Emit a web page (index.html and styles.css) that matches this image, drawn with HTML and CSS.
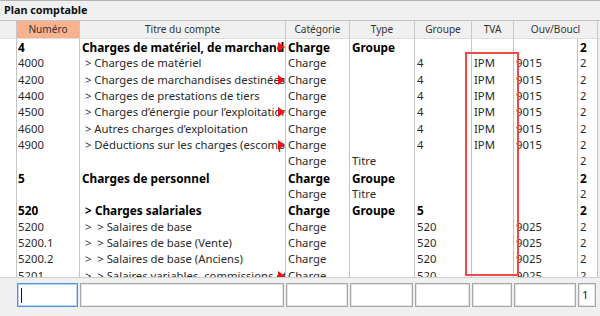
FILE: index.html
```html
<!DOCTYPE html>
<html lang="fr">
<head>
<meta charset="utf-8">
<title>Plan comptable</title>
<link rel="stylesheet" href="styles.css">
</head>
<body>
<div class="app">
  <div class="titlebar">Plan comptable</div>
  <div class="grid header">
    <div class="c rh"></div>
    <div class="c sel">Numéro</div>
    <div class="c">Titre du compte</div>
    <div class="c">Catégorie</div>
    <div class="c">Type</div>
    <div class="c">Groupe</div>
    <div class="c">TVA</div>
    <div class="c span2">Ouv/Boucl</div>
    <div class="c edge"></div>
  </div>
  <div class="body">
    <div class="grid row b">
      <div class="c rh"></div><div class="c">4</div><div class="c t ov">Charges de matériel, de marchandises et de prestations de tiers</div><div class="c">Charge</div><div class="c">Groupe</div><div class="c"></div><div class="c"></div><div class="c"></div><div class="c">2</div><div class="c edge"></div>
    </div>
    <div class="grid row">
      <div class="c rh"></div><div class="c">4000</div><div class="c t"> &gt; Charges de matériel</div><div class="c">Charge</div><div class="c"></div><div class="c">4</div><div class="c">IPM</div><div class="c">9015</div><div class="c">2</div><div class="c edge"></div>
    </div>
    <div class="grid row">
      <div class="c rh"></div><div class="c">4200</div><div class="c t ov"> &gt; Charges de marchandises destinées à la revente</div><div class="c">Charge</div><div class="c"></div><div class="c">4</div><div class="c">IPM</div><div class="c">9015</div><div class="c">2</div><div class="c edge"></div>
    </div>
    <div class="grid row">
      <div class="c rh"></div><div class="c">4400</div><div class="c t"> &gt; Charges de prestations de tiers</div><div class="c">Charge</div><div class="c"></div><div class="c">4</div><div class="c">IPM</div><div class="c">9015</div><div class="c">2</div><div class="c edge"></div>
    </div>
    <div class="grid row">
      <div class="c rh"></div><div class="c">4500</div><div class="c t ov"> &gt; Charges d’énergie pour l’exploitation</div><div class="c">Charge</div><div class="c"></div><div class="c">4</div><div class="c">IPM</div><div class="c">9015</div><div class="c">2</div><div class="c edge"></div>
    </div>
    <div class="grid row">
      <div class="c rh"></div><div class="c">4600</div><div class="c t"> &gt; Autres charges d’exploitation</div><div class="c">Charge</div><div class="c"></div><div class="c">4</div><div class="c">IPM</div><div class="c">9015</div><div class="c">2</div><div class="c edge"></div>
    </div>
    <div class="grid row">
      <div class="c rh"></div><div class="c">4900</div><div class="c t ov"> &gt; Déductions sur les charges (escomptes)</div><div class="c">Charge</div><div class="c"></div><div class="c">4</div><div class="c">IPM</div><div class="c">9015</div><div class="c">2</div><div class="c edge"></div>
    </div>
    <div class="grid row">
      <div class="c rh"></div><div class="c"></div><div class="c t"></div><div class="c">Charge</div><div class="c">Titre</div><div class="c"></div><div class="c"></div><div class="c"></div><div class="c">2</div><div class="c edge"></div>
    </div>
    <div class="grid row b">
      <div class="c rh"></div><div class="c">5</div><div class="c t">Charges de personnel</div><div class="c">Charge</div><div class="c">Groupe</div><div class="c"></div><div class="c"></div><div class="c"></div><div class="c">2</div><div class="c edge"></div>
    </div>
    <div class="grid row">
      <div class="c rh"></div><div class="c"></div><div class="c t"></div><div class="c">Charge</div><div class="c">Titre</div><div class="c"></div><div class="c"></div><div class="c"></div><div class="c">2</div><div class="c edge"></div>
    </div>
    <div class="grid row b">
      <div class="c rh"></div><div class="c">520</div><div class="c t"> &gt; Charges salariales</div><div class="c">Charge</div><div class="c">Groupe</div><div class="c">5</div><div class="c"></div><div class="c"></div><div class="c">2</div><div class="c edge"></div>
    </div>
    <div class="grid row">
      <div class="c rh"></div><div class="c">5200</div><div class="c t"> &gt;  &gt; Salaires de base</div><div class="c">Charge</div><div class="c"></div><div class="c">520</div><div class="c"></div><div class="c">9025</div><div class="c">2</div><div class="c edge"></div>
    </div>
    <div class="grid row">
      <div class="c rh"></div><div class="c">5200.1</div><div class="c t"> &gt;  &gt; Salaires de base (Vente)</div><div class="c">Charge</div><div class="c"></div><div class="c">520</div><div class="c"></div><div class="c">9025</div><div class="c">2</div><div class="c edge"></div>
    </div>
    <div class="grid row">
      <div class="c rh"></div><div class="c">5200.2</div><div class="c t"> &gt;  &gt; Salaires de base (Anciens)</div><div class="c">Charge</div><div class="c"></div><div class="c">520</div><div class="c"></div><div class="c">9025</div><div class="c">2</div><div class="c edge"></div>
    </div>
    <div class="grid row">
      <div class="c rh"></div><div class="c">5201</div><div class="c t ov"> &gt;  &gt; Salaires variables, commissions et primes</div><div class="c">Charge</div><div class="c"></div><div class="c">520</div><div class="c"></div><div class="c">9025</div><div class="c">2</div><div class="c edge"></div>
    </div>
  </div>
  <div class="grid footer">
    <div class="f rh"></div>
    <div class="f"><div class="box focus"><span class="caret"></span></div></div>
    <div class="f"><div class="box"></div></div>
    <div class="f"><div class="box"></div></div>
    <div class="f"><div class="box"></div></div>
    <div class="f"><div class="box"></div></div>
    <div class="f"><div class="box"></div></div>
    <div class="f"><div class="box"></div></div>
    <div class="f"><div class="box">1</div></div>
    <div class="f"></div>
  </div>
  <div class="annot"></div>
</div>
</body>
</html>
```
FILE: styles.css
```css
html, body {
  margin: 0;
  padding: 0;
  background: #f0f0f0;
}
.app {
  position: relative;
  width: 600px;
  height: 316px;
  overflow: hidden;
  font-family: "Noto Sans", "Open Sans", sans-serif;
  background: #f0f0f0;
}
.titlebar {
  box-sizing: border-box;
  height: 20px;
  border-top: 1px solid #b4b4b4;
  padding-left: 4px;
  font-weight: bold;
  font-size: 10.8px;
  line-height: 18px;
  color: #111;
}
.grid {
  display: grid;
  grid-template-columns: 16px 63px 206px 64px 65px 57px 42px 64px 20px 3px;
}
.header {
  box-sizing: border-box;
  height: 19px;
  border-top: 1px solid #c4c4c4;
  border-bottom: 1px solid #dcdcdc;
  font-size: 10.1px;
  line-height: 17px;
  color: #333;
  background: #f0f0f0;
}
.header .c {
  text-align: center;
  border-left: 1px solid #c8c8c8;
  white-space: nowrap;
  overflow: hidden;
}
.header .rh {
  border-left: none;
}
.header .sel {
  background: #f9b28e;
}
.header .span2 {
  grid-column: span 2;
}
.header .edge {
  background: #f0f0f0;
}
.body {
  height: 238px;
  overflow: hidden;
  background: #fff;
}
.row {
  height: 16.35px;
  font-size: 11.3px;
  line-height: 16.35px;
  color: #2a2a2a;
}
.row.b {
  font-weight: bold;
  font-size: 11.8px;
  color: #000;
}
.row .c {
  position: relative;
  box-sizing: border-box;
  padding-left: 2px;
  border-left: 1px solid #c4c4c4;
  white-space: pre;
  overflow: hidden;
}
.row .rh {
  border-left: none;
  padding: 0;
}
.row .c:nth-child(2) {
  padding-left: 1px;
}
.row .edge {
  background: #f0f0f0;
  padding: 0;
}
.row .ov::after {
  content: "";
  position: absolute;
  right: 0;
  top: 3px;
  width: 0;
  height: 0;
  border-left: 7px solid #e8141a;
  border-top: 5px solid transparent;
  border-bottom: 5px solid transparent;
}
.footer {
  box-sizing: border-box;
  height: 39px;
  border-top: 1px solid #d0d0d0;
  padding-top: 5px;
}
.f {
  padding: 0 1px 0 1px;
}
.f.rh {
  padding: 0;
}
.box {
  box-sizing: border-box;
  height: 24px;
  background: #fff;
  border: 1px solid #a6a6a6;
  box-shadow: inset 0 0 0 1px #e4e4e4;
  font-family: "Noto Sans", sans-serif;
  font-size: 11.3px;
  line-height: 22px;
  padding-left: 3px;
  color: #222;
}
.box.focus {
  border-color: #4a97e0;
  box-shadow: inset 0 0 0 1px #b6d5f4;
  position: relative;
}
.caret {
  position: absolute;
  left: 3px;
  top: 4px;
  width: 1px;
  height: 15px;
  background: #111;
}
.annot {
  position: absolute;
  left: 465px;
  top: 52px;
  width: 54px;
  height: 224px;
  box-sizing: border-box;
  border: 2px solid #f24848;
}
```
